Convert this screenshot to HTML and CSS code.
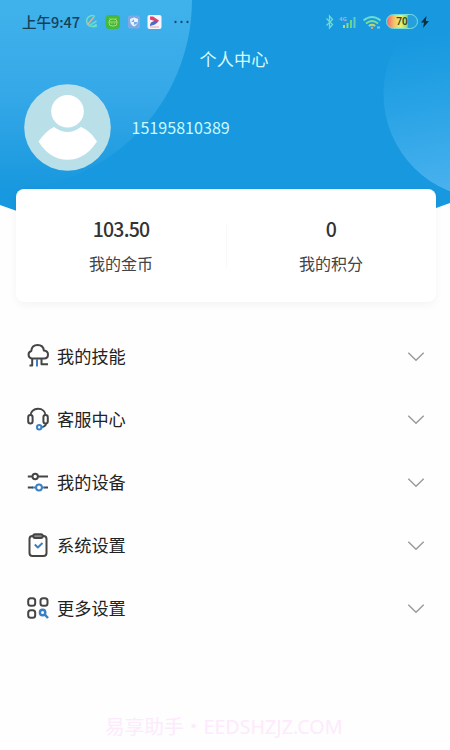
FILE: index.html
```html
<!DOCTYPE html>
<html lang="zh-CN">
<head>
<meta charset="utf-8">
<title>个人中心</title>
<link rel="stylesheet" href="styles.css">
</head>
<body>
<main class="screen">
  <header class="hero">
    <svg class="hero-bg" width="450" height="216" viewBox="0 0 450 216">
      <defs>
        <linearGradient id="orbL" x1="0" y1="0" x2="0" y2="190" gradientUnits="userSpaceOnUse"><stop offset="0" stop-color="#40b2eb"/><stop offset=".5" stop-color="#35a8e8"/><stop offset="1" stop-color="#1898de"/></linearGradient>
        <linearGradient id="orbR" x1="420" y1="35" x2="450" y2="194" gradientUnits="userSpaceOnUse"><stop offset="0" stop-color="#1798df"/><stop offset=".4" stop-color="#27a2e5"/><stop offset="1" stop-color="#4bb2ef"/></linearGradient>
        <clipPath id="hero"><path d="M0 0H450V203Q225 288 0 205Z"/></clipPath>
      </defs>
      <g clip-path="url(#hero)">
        <rect width="450" height="216" fill="#1798df"/>
        <circle cx="2" cy="0" r="190" fill="url(#orbL)"/>
        <circle cx="488" cy="94" r="104.500" fill="url(#orbR)"/>
      </g>
    </svg>
    <div class="status">
      <span class="time">上午9:47</span>
      <svg class="apps" width="106" height="18" viewBox="0 0 106 18">
        <g fill="none" stroke-width="1.500"><path d="M11 3.500A5.400 5.400 0 1 0 12.500 11" stroke="#72dcc2"/><path d="M3.200 12 10 4" stroke="#e4b190"/><path d="M4.500 13.200 12.500 8M9 14l4-1" stroke="#62dfca"/></g>
        <rect x="21.500" y="2" width="14.500" height="14" rx="4" fill="#45b83e"/>
        <rect x="25" y="6" width="8" height="7" rx="3" fill="none" stroke="#a7dc71"/><path d="M25 9h8M25.500 5l1.500 1.500M32.500 5 31 6.500M27.500 10.500h.8M30 10.500h.8" stroke="#a7dc71"/>
        <rect x="44" y="2.500" width="12" height="13" rx="2" fill="#7fa9e5"/><path d="m50 4.500 4 1.500c0 4-1 6-4 7.500-3-1.500-4-3.500-4-7.500Z" fill="#e8f5ff"/><path d="M50 6v3h-2.800M50 9h3v1.500L50 12Z" fill="#6faee7"/>
        <rect x="63.500" y="2" width="14" height="14" rx="2" fill="#f6f5fb"/><path d="m66 3.500 3 0 6 4-2.500 3-2-2.500-4.500-1.500Z" fill="#e34271"/><path d="m66 12 1-2.500 4-2 3 1-3 3-5 1.500Z" fill="#496dbe"/><path d="M66 14h9" stroke="#e7a7b7"/>
        <g fill="#164967"><circle cx="91.500" cy="9" r="1.150"/><circle cx="97.500" cy="9" r="1.150"/><circle cx="103.500" cy="9" r="1.150"/></g>
      </svg>
      <span class="spacer"></span>
      <svg class="signals" width="60" height="18" viewBox="0 0 60 18">
        <path d="m2.500 5.500 6 6L5.500 15V3l3 3.500-6 6" fill="none" stroke="#72d9cf" stroke-width="1.300"/>
        <g stroke-width="2"><path d="M20 15v-3" stroke="#c2d66d"/><path d="M23.500 15v-5" stroke="#8fda79"/><path d="M27 15V7" stroke="#66d789"/><path d="M30.500 15V4" stroke="#63cbb8"/></g>
        <text class="net" x="15" y="7.500">4G</text>
        <g fill="none" stroke-width="1.800"><path d="M39.500 7.500q8.500-7 17 0" stroke="#69ddd0"/><path d="M42 10.500q6-5 12 0" stroke="#83df8d"/><path d="M44.800 13q3.200-2.500 6.400 0" stroke="#c0d76f"/></g><circle cx="48" cy="14.700" r="1.200" fill="#e3a66c"/><path d="M53 14.500h3" stroke="#72cfe6" stroke-width="2"/>
      </svg>
      <span class="battery">70</span>
      <svg class="bolt" width="8" height="12" viewBox="0 0 8 12"><path d="M5.500 0 0 6.500h3L2 12l6-7H4.800Z" fill="#152c3b"/></svg>
    </div>
    <h1 class="title">个人中心</h1>
    <div class="profile">
      <svg width="87" height="87" viewBox="0 0 87 87"><circle cx="43.500" cy="43.500" r="43.300" fill="#b9e0e9"/><circle cx="43.500" cy="27.300" r="16.300" fill="#fff"/><path d="M30 43Q43.500 53 57 43C64 46 69 51 73 57.500Q61 75.800 43.500 75.800T14.500 57.500C19 51 24 46 30 43Z" fill="#fff"/></svg>
      <span class="phone">15195810389</span>
    </div>
  </header>
  <section class="card">
    <div class="stat"><strong>103.50</strong><span>我的金币</span></div>
    <div class="stat"><strong>0</strong><span>我的积分</span></div>
  </section>
  <nav class="menu">
    <a class="row">
      <svg class="icon" viewBox="0 0 24 26"><path d="M5.500 15.500A3.900 3.900 0 0 1 5.300 8C5.600 4.200 8 2 11.600 2c3.500 0 5.900 2.300 6.200 5.500 2.500.3 4.200 1.900 4.200 4 0 2.300-1.600 4-3.900 4Z"/><path d="M6.200 16v6.500H3.500M15.500 16v5.200H22"/><path class="blue" d="M11 16v7.500"/></svg>
      <span>我的技能</span><svg class="chevron" viewBox="0 0 16 10"><path d="m1 1.500 7 7 7-7"/></svg></a>
    <a class="row">
      <svg class="icon" viewBox="0 0 24 26"><path d="M4.500 9.500C4.500 5.500 7.700 2.800 12 2.800s7.500 2.700 7.500 6.700"/><rect x="2.200" y="9" width="4.400" height="8.500" rx="2.200"/><rect x="17.400" y="9" width="4.400" height="8.500" rx="2.200"/><path d="M20 17.200c0 2-1.500 3.300-3.800 3.800"/><circle class="blue" cx="13.200" cy="21.200" r="2.200"/><path class="blue" d="M15.200 21.200h2"/></svg>
      <span>客服中心</span><svg class="chevron" viewBox="0 0 16 10"><path d="m1 1.500 7 7 7-7"/></svg></a>
    <a class="row">
      <svg class="icon" viewBox="0 0 24 26"><path d="M1.800 7.500h4.700M12 7.500h10"/><circle cx="9.200" cy="7.500" r="2.700"/><path class="blue" d="M6 18.500h4M16 18.500h3"/><path d="M1.800 18.500h5M18.500 18.500H22"/><circle class="blue" cx="13" cy="18.500" r="2.900"/></svg>
      <span>我的设备</span><svg class="chevron" viewBox="0 0 16 10"><path d="m1 1.500 7 7 7-7"/></svg></a>
    <a class="row">
      <svg class="icon" viewBox="0 0 24 26"><rect x="3.500" y="4" width="17" height="20" rx="3"/><rect class="clip" x="7.200" y="2.200" width="9.600" height="3.800" rx="1.900"/><path class="blue" d="m8.800 12.500 3 3 4.700-4.500"/></svg>
      <span>系统设置</span><svg class="chevron" viewBox="0 0 16 10"><path d="m1 1.500 7 7 7-7"/></svg></a>
    <a class="row">
      <svg class="icon" viewBox="0 0 24 26"><rect x="2.200" y="3.300" width="7" height="7.500" rx="2.500"/><rect x="14.500" y="3.300" width="7" height="7.500" rx="2.500"/><rect x="2.200" y="15.200" width="7" height="7.500" rx="2.500"/><circle class="blue thick" cx="16.600" cy="17.500" r="2.700"/><path class="blue thick" d="m18.800 19.700 3.200 3.300"/></svg>
      <span>更多设置</span><svg class="chevron" viewBox="0 0 16 10"><path d="m1 1.500 7 7 7-7"/></svg></a>
  </nav>
  <footer class="mark">易享助手・EEDSHZJZ.COM</footer>
</main>
</body>
</html>
```
FILE: styles.css
```css
* { box-sizing: border-box; }
body { margin: 0; background: #fefefe; font-family: "Noto Sans CJK SC", sans-serif; color: #2b2b2b; }
.screen { width: 450px; height: 750px; display: flex; flex-direction: column; overflow: hidden; }
.hero { position: relative; height: 189px; flex: none; }
.hero-bg { position: absolute; top: 0; left: 0; z-index: -1; }
.status { height: 43px; padding: 0 21px 0 22px; display: flex; align-items: center; }
.time { width: 62px; font-size: 14.5px; line-height: 20px; font-weight: 500; color: #143f58; white-space: nowrap; }
.apps { flex: none; }
.spacer { flex: 1; }
.signals { flex: none; margin-right: 2px; }
.net { font: 700 6px "Noto Sans", sans-serif; fill: #9cb7d1; }
.battery { width: 32px; height: 15px; border: 1.5px solid #7be1d6; border-radius: 8px; background: linear-gradient(90deg, #ef6775, #f4c765 25%, #eef06a 45%, #8edc7c 68%, #279fdc 69%); font: 600 10px/12px "Noto Sans", sans-serif; text-align: center; color: #3b4927; flex: none; }
.bolt { flex: none; margin-left: 3px; }
.title { margin: 4px 0 0; padding-left: 18px; font-size: 17.2px; line-height: 24px; font-weight: 400; text-align: center; color: #d8fcff; }
.profile { display: flex; align-items: center; gap: 20.500px; padding-left: 24px; margin-top: 13px; }
.phone { margin-top: -1px; font-size: 16.1px; line-height: 24px; color: #c9faff; }
.card { height: 113px; margin: 0 14px 0 16px; flex: none; display: flex; background: #fff; border-radius: 8px; box-shadow: 0 3px 8px rgba(0, 0, 0, .045); }
.stat { flex: 1; display: flex; flex-direction: column; align-items: center; padding-top: 26px; }
.stat + .stat { background: linear-gradient(#f8f8f8, #f8f8f8) left 36px / 1px 42px no-repeat; }
.stat strong { font-size: 19.5px; line-height: 28px; font-weight: 500; letter-spacing: -.8px; color: #333; }
.stat span { margin-top: 8px; font-size: 16px; line-height: 24px; color: #444; }
.menu { margin-top: 23px; flex: none; }
.row { height: 63.1px; padding: 0 25px 0 26px; display: flex; align-items: center; font-size: 17.2px; line-height: 26px; color: #222; }
.row span { margin: -1px 0 0 7px; }
.icon { width: 24px; height: 26px; margin-top: -1px; fill: none; stroke: #454545; stroke-width: 2; stroke-linejoin: round; }
.icon .blue { stroke: #3c80c3; }
.icon .thick { stroke-width: 2.4; }
.icon .clip { fill: #8b8b8b; }
.chevron { width: 18px; height: 11px; margin: -1px 0 0 auto; fill: none; stroke: #999; stroke-width: 1.25; }
.mark { margin: 74px 0 0 105px; font-family: "Noto Sans", "Noto Sans CJK SC", sans-serif; font-size: 19.7px; line-height: 26px; color: #fdeafd; white-space: nowrap; }
```
